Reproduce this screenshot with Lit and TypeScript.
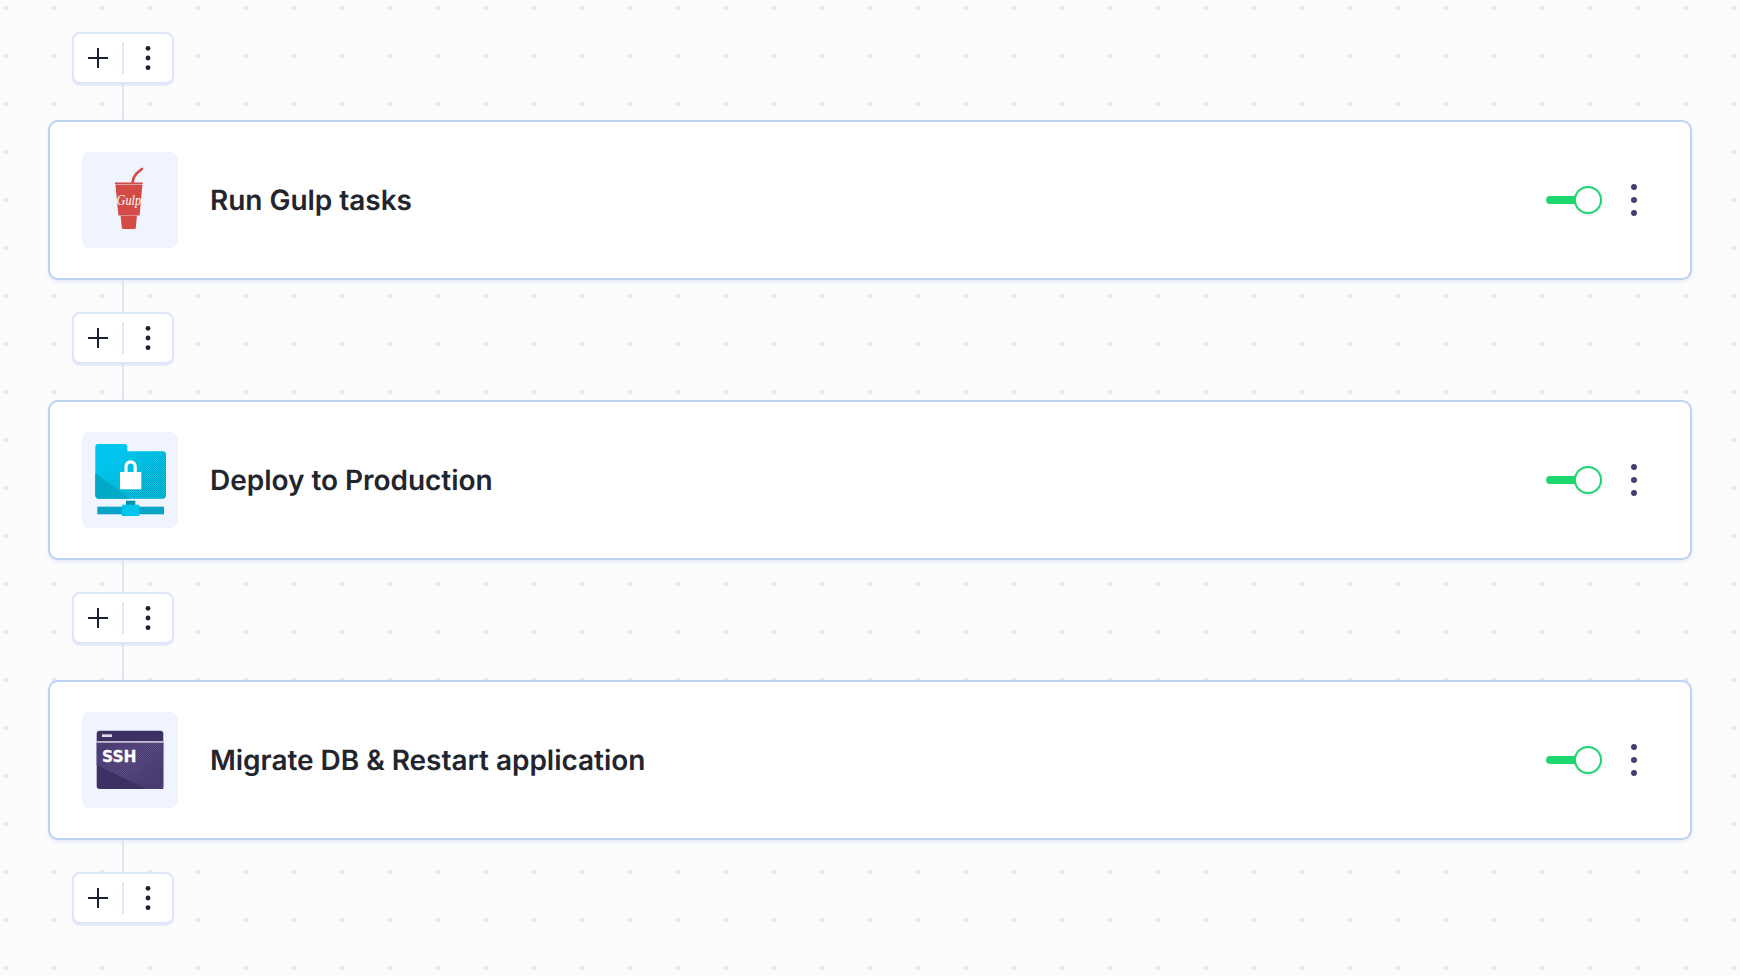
import { LitElement, html, css, svg } from 'lit';
import { customElement } from 'lit/decorators.js';

const gulpIcon = svg`
  <path d="M50.6 31 C51 25 53 23 55 21 L60 17" fill="none" stroke="#d34a47" stroke-width="2.6" stroke-linecap="round"/>
  <path d="M33 30.4 L60.6 30.4 L60.8 32 L32.8 32 Z" fill="#d34a47"/>
  <path d="M33.4 32.4 L60.4 32.4 L57.6 63.4 L36.4 63.4 Z" fill="#d34a47"/>
  <path d="M38.6 63.8 L54.9 63.8 L53.8 76 Q53.6 77 52.6 77 L41 77 Q40 77 39.9 76 Z" fill="#d34a47"/>
  <text x="34.6" y="52.5" textLength="24.5" lengthAdjust="spacingAndGlyphs" class="gulp-word">Gulp</text>
`;

const folderIcon = svg`
  <defs>
    <pattern id="speck" width="2" height="2" patternUnits="userSpaceOnUse">
      <rect width="1" height="1" fill="#00a0ba"/>
      <rect x="1" y="1" width="1" height="1" fill="#00a0ba"/>
    </pattern>
    <linearGradient id="folderFade" x1="0.3" y1="0.2" x2="0.8" y2="0.7">
      <stop offset="0" stop-color="#fff" stop-opacity="0"/>
      <stop offset="1" stop-color="#fff" stop-opacity="1"/>
    </linearGradient>
    <mask id="folderMask"><rect x="13" y="12" width="72" height="56" fill="url(#folderFade)"/></mask>
  </defs>
  <path d="M16.3 12 H42.3 A3 3 0 0 1 45.3 15 V19.3 H80.5 A3.5 3.5 0 0 1 84 22.8 V63 A3.7 3.7 0 0 1 80.3 66.7 H17 A3.7 3.7 0 0 1 13.3 63 V15 A3 3 0 0 1 16.3 12 Z" fill="#00c6ee"/>
  <path d="M16.3 12 H42.3 A3 3 0 0 1 45.3 15 V19.3 H80.5 A3.5 3.5 0 0 1 84 22.8 V63 A3.7 3.7 0 0 1 80.3 66.7 H17 A3.7 3.7 0 0 1 13.3 63 V15 A3 3 0 0 1 16.3 12 Z" fill="url(#speck)" mask="url(#folderMask)"/>
  <path d="M13.3 41 L48 66.7 H17 A3.7 3.7 0 0 1 13.3 63 Z" fill="#00a9c6"/>
  <path d="M44 41 V34.5 A4.6 4.6 0 0 1 53.2 34.5 V41" fill="none" stroke="#fff" stroke-width="3.2"/>
  <rect x="38" y="40" width="21.3" height="17.3" fill="#fff"/>
  <rect x="44" y="68.7" width="9.3" height="4.5" fill="#0592ad"/>
  <rect x="15.3" y="74.7" width="66.7" height="7.6" fill="#05a6c5"/>
  <rect x="40" y="72.7" width="17.3" height="11.3" fill="#00c4ec"/>
`;

const sshIcon = svg`
  <defs>
    <pattern id="grain" width="2" height="2" patternUnits="userSpaceOnUse">
      <rect width="1" height="1" fill="#5d4e88"/>
      <rect x="1" y="1" width="1" height="1" fill="#5d4e88"/>
    </pattern>
    <linearGradient id="grainFade" x1="0.1" y1="0.1" x2="0.85" y2="0.7">
      <stop offset="0" stop-color="#fff" stop-opacity="0.2"/>
      <stop offset="0.6" stop-color="#fff" stop-opacity="1"/>
      <stop offset="1" stop-color="#fff" stop-opacity="0"/>
    </linearGradient>
    <mask id="grainMask"><rect x="15" y="31" width="67" height="46" fill="url(#grainFade)"/></mask>
  </defs>
  <path d="M17.7 18.7 H78.3 A3 3 0 0 1 81.3 21.7 V74 A3 3 0 0 1 78.3 77 H17.7 A3 3 0 0 1 14.7 74 V21.7 A3 3 0 0 1 17.7 18.7 Z" fill="#3d3163"/>
  <path d="M14.7 30.7 H81.3 V77 H64.7 L14.7 53 Z" fill="#4a3c70"/>
  <path d="M14.7 30.7 H81.3 V77 H64.7 L14.7 53 Z" fill="url(#grain)" mask="url(#grainMask)"/>
  <rect x="14.7" y="29.2" width="66.6" height="1.5" fill="#dcdae8"/>
  <rect x="20" y="22.3" width="10" height="2.7" fill="#dcdae8"/>
  <text x="37.3" y="50" text-anchor="middle" class="ssh-word">SSH</text>
`;

const icons = { gulp: gulpIcon, folder: folderIcon, ssh: sshIcon };

@customElement('flow-actions')
export class FlowActions extends LitElement {
  static styles = css`
    :host {
      display: block;
      width: 102px;
      margin-left: 24px;
    }

    .box {
      box-sizing: border-box;
      height: 52px;
      display: grid;
      grid-template-columns: 1fr 2px 1fr;
      align-items: center;
      background: #fff;
      border: 2px solid #dde7fa;
      border-radius: 8px;
      box-shadow: 0 2px 1px #e6ebf7;
    }

    button {
      display: flex;
      align-items: center;
      justify-content: center;
      height: 100%;
      padding: 0;
      background: none;
      border: none;
    }

    .divider {
      height: 32px;
      background: #dde7fa;
    }

    svg {
      display: block;
    }
  `;

  render() {
    return html`
      <div class="box">
        <button aria-label="Add step">
          <svg width="20" height="20" viewBox="0 0 20 20">
            <path d="M0 10H20M10 0V20" stroke="#1c2033" stroke-width="2" stroke-linecap="round"/>
          </svg>
        </button>
        <div class="divider"></div>
        <button aria-label="More">
          <svg width="6" height="26" viewBox="0 0 6 26">
            <circle cx="3" cy="3.3" r="2.4" fill="#1c2033"/>
            <circle cx="3" cy="13" r="2.4" fill="#1c2033"/>
            <circle cx="3" cy="22.7" r="2.4" fill="#1c2033"/>
          </svg>
        </button>
      </div>
    `;
  }
}

@customElement('flow-task')
export class FlowTask extends LitElement {
  static properties = {
    label: { type: String },
    icon: { type: String }
  };

  declare label: string;
  declare icon: keyof typeof icons;

  static styles = css`
    :host {
      display: block;
    }

    .card {
      box-sizing: border-box;
      height: 160px;
      display: flex;
      align-items: center;
      padding: 0 32px;
      background: #fff;
      border: 2px solid #bdd2f3;
      border-radius: 10px;
      box-shadow: 0 2px 4px rgba(190, 205, 235, 0.35);
    }

    .tile {
      width: 96px;
      height: 96px;
      flex: none;
      background: #eff4fe;
      border-radius: 8px;
    }

    .tile svg {
      display: block;
    }

    .gulp-word {
      font: italic 400 15px "Liberation Serif", serif;
      fill: #fff;
    }

    .ssh-word {
      font: 700 15.5px "DejaVu Sans", sans-serif;
      fill: #fff;
      stroke: #fff;
      stroke-width: 0.3;
    }

    .label {
      flex: 1;
      margin-left: 32px;
      font: 600 28px Inter, sans-serif;
      letter-spacing: -0.035px;
      text-rendering: geometricPrecision;
      color: #22252d;
    }

    .toggle {
      display: flex;
      align-items: center;
      margin-right: 8px;
    }

    .track {
      width: 40px;
      height: 8px;
      background: #1ed76e;
      border-radius: 4px;
    }

    .thumb {
      box-sizing: border-box;
      width: 28px;
      height: 28px;
      margin-left: -12px;
      background: #fff;
      border: 2.5px solid #1ed76e;
      border-radius: 50%;
      box-shadow: 0 1px 3px rgba(40, 60, 90, 0.12);
    }

    .menu {
      display: flex;
      align-items: center;
      justify-content: center;
      width: 48px;
      height: 48px;
      padding: 0;
      background: none;
      border: none;
    }
  `;

  render() {
    return html`
      <div class="card">
        <div class="tile">
          <svg width="96" height="96" viewBox="0 0 96 96">${icons[this.icon]}</svg>
        </div>
        <div class="label">${this.label}</div>
        <div class="toggle">
          <div class="track"></div>
          <div class="thumb"></div>
        </div>
        <button class="menu" aria-label="Step options">
          <svg width="6" height="32" viewBox="0 0 6 32">
            <circle cx="3" cy="3" r="3" fill="#493f74"/>
            <circle cx="3" cy="16" r="3" fill="#493f74"/>
            <circle cx="3" cy="29" r="3" fill="#493f74"/>
          </svg>
        </button>
      </div>
    `;
  }
}

@customElement('app-root')
export class AppRoot extends LitElement {
  static styles = css`
    :host {
      display: block;
      min-height: 976px;
      box-sizing: border-box;
      padding: 32px 48px 52px;
      background-color: #fcfcfd;
      background-image: radial-gradient(circle at 24px 24px, #dfe9fb 2px, transparent 2.6px);
      background-size: 48px 48px;
      background-position: -18px -16px;
    }

    .link {
      width: 2px;
      margin-left: 74px;
      background: #dbe6f8;
    }

    .link.above {
      height: 36px;
    }

    .link.below {
      height: 32px;
    }
  `;

  private steps = [
    { label: 'Run Gulp tasks', icon: 'gulp' },
    { label: 'Deploy to Production', icon: 'folder' },
    { label: 'Migrate DB & Restart application', icon: 'ssh' }
  ];

  render() {
    return html`
      <flow-actions></flow-actions>
      ${this.steps.map(step => html`
        <div class="link above"></div>
        <flow-task .label=${step.label} .icon=${step.icon}></flow-task>
        <div class="link below"></div>
        <flow-actions></flow-actions>
      `)}
    `;
  }
}
